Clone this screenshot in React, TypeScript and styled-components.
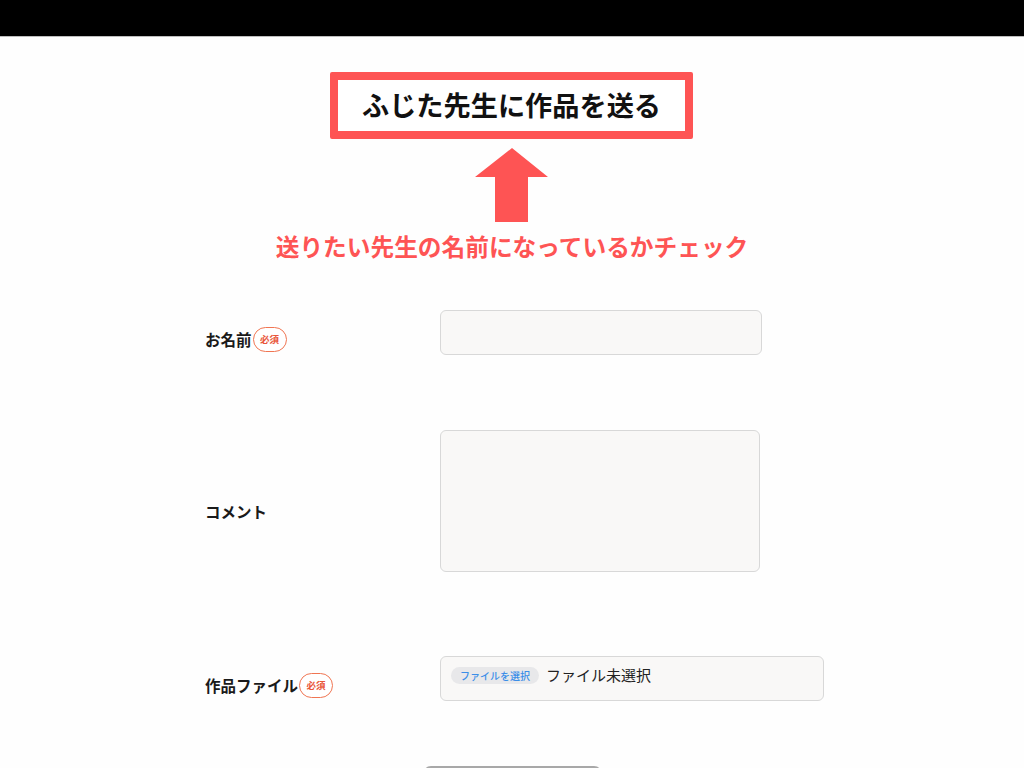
import React from "react";
import styled, { createGlobalStyle } from "styled-components";

const GlobalStyle = createGlobalStyle`
  html, body {
    margin: 0;
    padding: 0;
    overflow: hidden;
    background: #fefefe;
    font-family: "Noto Sans CJK JP", "Noto Sans", sans-serif;
    color: #1a1a1a;
  }
  * { box-sizing: border-box; }
`;

const TopBar = styled.div`
  height: 37px;
  background: #000;
  border-bottom: 1px solid #bdbdbd;
`;

const Main = styled.main`
  display: flex;
  flex-direction: column;
  align-items: center;
  padding-top: 35px;
`;

const TitleBox = styled.div`
  width: 363px;
  height: 67px;
  border: 8px solid #fe5454;
  border-radius: 2px;
  background: #fff;
  display: flex;
  align-items: center;
  justify-content: center;
  margin-left: -1px;
`;

const Title = styled.h1`
  margin: 0;
  font-size: 27.2px;
  font-weight: 700;
  color: #111;
  line-height: 1;
  margin-top: -2px;
`;

const ArrowWrap = styled.div`
  margin-top: 9px;
  height: 74px;
  display: flex;
`;

const Caption = styled.p`
  margin: 10px 0 0;
  font-size: 23.7px;
  font-weight: 700;
  color: #fe5454;
  line-height: 28px;
`;

const Form = styled.form`
  align-self: stretch;
  display: flex;
  flex-direction: column;
  padding-left: 205px;
`;

const Row = styled.div<{ $top: number }>`
  display: flex;
  align-items: center;
  margin-top: ${(p) => p.$top}px;
`;

const Label = styled.div<{ $drop: number }>`
  width: 235px;
  display: flex;
  align-items: center;
  font-size: 15.5px;
  font-weight: 700;
  color: #1a1a1a;
  margin-top: ${(p) => p.$drop}px;
`;

const Badge = styled.span`
  display: inline-flex;
  align-items: center;
  justify-content: center;
  width: 34px;
  height: 25px;
  margin-left: 1px;
  border: 1px solid #f07552;
  border-radius: 13px;
  font-size: 9.5px;
  font-weight: 700;
  color: #e9563a;
  background: #fff;
`;

const Field = styled.div<{ $w: number; $h: number }>`
  width: ${(p) => p.$w}px;
  height: ${(p) => p.$h}px;
  background: #f9f8f7;
  border: 1px solid #d8d8d8;
  border-radius: 6px;
`;

const FileField = styled(Field)`
  display: flex;
  align-items: flex-start;
  padding: 10px 0 0 10px;
  gap: 7px;
`;

const FileButton = styled.span`
  display: inline-flex;
  align-items: center;
  height: 17px;
  padding: 0 9px;
  border-radius: 9px;
  background: #e8e8ea;
  color: #3b8ee8;
  font-size: 10px;
  font-weight: 500;
`;

const FileText = styled.span`
  font-size: 15px;
  line-height: 15px;
  color: #222;
`;

const SubmitRow = styled.div`
  display: flex;
  margin-top: 65px;
  padding-left: 218px;
`;

const Submit = styled.button`
  width: 179px;
  height: 52px;
  border: 2px solid #a8a8a8;
  border-radius: 8px;
  background: #fff;
`;

export default function App() {
  return (
    <>
      <GlobalStyle />
      <TopBar />
      <Main>
        <TitleBox>
          <Title>ふじた先生に作品を送る</Title>
        </TitleBox>
        <ArrowWrap>
          <svg width="74" height="74" viewBox="0 0 74 74">
            <polygon points="37,0 73,29 53,29 53,74 20,74 20,29 0,29" fill="#fe5454" />
          </svg>
        </ArrowWrap>
        <Caption>送りたい先生の名前になっているかチェック</Caption>
        <Form>
          <Row $top={50}>
            <Label $drop={13}>
              お名前<Badge>必須</Badge>
            </Label>
            <Field $w={322} $h={45} />
          </Row>
          <Row $top={75}>
            <Label $drop={20}>コメント</Label>
            <Field $w={320} $h={142} />
          </Row>
          <Row $top={84}>
            <Label $drop={13}>
              作品ファイル<Badge>必須</Badge>
            </Label>
            <FileField $w={384} $h={45}>
              <FileButton>ファイルを選択</FileButton>
              <FileText>ファイル未選択</FileText>
            </FileField>
          </Row>
          <SubmitRow>
            <Submit type="button" />
          </SubmitRow>
        </Form>
      </Main>
    </>
  );
}
